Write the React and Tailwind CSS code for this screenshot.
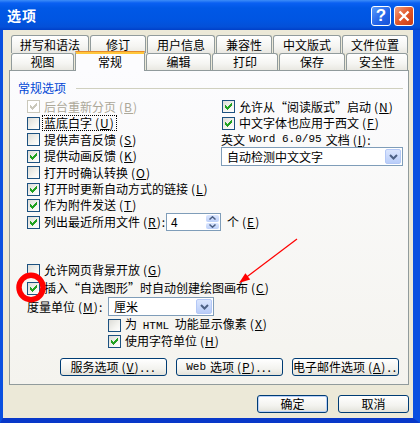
import React from "react";

function Check({ color }) {
  const cols = [[2, 4], [3, 5], [4, 6], [5, 5], [6, 4], [7, 3], [8, 2]];
  return (
    <svg width="11" height="11" viewBox="0 0 11 11" shapeRendering="crispEdges">
      {cols.map(([x, y]) => (
        <rect key={x} x={x} y={y} width="1" height="3" fill={color} />
      ))}
    </svg>
  );
}

function Box({ checked, disabled }) {
  if (disabled)
    return (
      <span className="w-[13px] h-[13px] border border-[#cac8bb] bg-white shrink-0 flex">
        {checked && <Check color="#cac8bb" />}
      </span>
    );
  return (
    <span className="w-[13px] h-[13px] border border-[#1c5180] bg-[linear-gradient(135deg,#dcdcd7,#f4f4f0_60%,#ffffff)] shrink-0 flex">
      {checked && <Check color="#21a121" />}
    </span>
  );
}

function M({ k }) {
  return (
    <span className="ml-[3px] tracking-[1px]">
      (<span className="underline underline-offset-[1px]">{k}</span>)
    </span>
  );
}

function CB({ checked, disabled, children, k, h, focus, extra }) {
  return (
    <div className={`flex items-center ${h}`}>
      <Box checked={checked} disabled={disabled} />
      <span className={disabled ? "ml-[4px] text-[#aca899] whitespace-nowrap" : focus ? "ml-[3px] whitespace-nowrap outline-1 outline-dotted outline-black px-[1px] py-[1px]" : "ml-[4px] whitespace-nowrap"}>
        {children}
        {k && <M k={k} />}
      </span>
      {extra}
    </div>
  );
}

function Chevron() {
  return (
    <svg width="9" height="6" viewBox="0 0 9 6">
      <path d="M1 1 L4.5 4.5 L8 1" stroke="#4d6185" strokeWidth="2" fill="none" />
    </svg>
  );
}

function Select({ w, text }) {
  return (
    <div className={`${w} h-[19px] border border-[#7f9db9] bg-white flex items-center p-[1px]`}>
      <span className="flex-1 pl-[4px] whitespace-nowrap">{text}</span>
      <span className="w-[16px] h-full rounded-[2px] bg-[linear-gradient(to_bottom,#dbe6fe,#b9cdf9)] border border-[#b4c8f6] flex items-center justify-center">
        <Chevron />
      </span>
    </div>
  );
}

function Tab({ label, w, sel }) {
  if (sel)
    return (
      <div className={`${w} h-[20px] mb-[-1px] relative z-10 bg-[#fcfcfe] border-x border-[#919b9c] rounded-t-[3px] flex flex-col`}>
        <div className="h-[1px] bg-[#e68b2c] mx-[-1px] rounded-t-[3px]" />
        <div className="h-[2px] bg-[#ffc73c]" />
        <div className="flex-1 flex items-center justify-center pb-[2px]">{label}</div>
      </div>
    );
  return (
    <div className={`${w} h-full border border-b-0 border-[#919b9c] rounded-t-[3px] bg-[linear-gradient(to_bottom,#ffffff,#f5f5f2_60%,#e9e8e2)] flex items-center justify-center whitespace-nowrap`}>
      {label}
    </div>
  );
}

function Btn({ w, children, def }) {
  return (
    <div
      className={
        def
          ? `${w} h-[18px] border border-[#003c74] rounded-[3px] bg-[linear-gradient(to_bottom,#ffffff,#f3f3ef_60%,#e3e2da)] shadow-[inset_0_0_0_1px_#b8d0f8] flex items-center justify-center whitespace-nowrap`
          : `${w} h-[18px] border border-[#003c74] rounded-[3px] bg-[linear-gradient(to_bottom,#ffffff,#f3f3ef_60%,#e3e2da)] flex items-center justify-center whitespace-nowrap`
      }
    >
      {children}
    </div>
  );
}

const mono = "font-['Liberation_Mono',monospace] text-[11px]";

function TitleBar() {
  return (
    <div className="h-[30px] flex items-center pl-[7px] pr-[6px] bg-[linear-gradient(to_bottom,#3d8df8_0px,#0a60f2_3px,#0058e6_8px,#0055e2_20px,#0450d8_27px,#003fc8_30px)]">
      <span className="text-white font-bold text-[14px] tracking-[1px]">选项</span>
      <div className="ml-auto flex gap-[3px] mt-[1px]">
        <div className="w-[20px] h-[20px] border border-white rounded-[3px] bg-[linear-gradient(135deg,#5a9cfb,#2465ea_55%,#1650d6)] flex items-center justify-center text-white font-bold text-[17px] font-['Liberation_Sans',sans-serif]">
          ?
        </div>
        <div className="w-[20px] h-[20px] border border-white rounded-[3px] bg-[linear-gradient(135deg,#f0a07f,#e2572a_50%,#c93c14)] flex items-center justify-center">
          <svg width="12" height="12" viewBox="0 0 12 12">
            <path d="M1.5 1.5 L10.5 10.5 M10.5 1.5 L1.5 10.5" stroke="white" strokeWidth="2.4" />
          </svg>
        </div>
      </div>
    </div>
  );
}

function Spin() {
  return (
    <div className="w-[55px] h-[18px] border border-[#7f9db9] bg-white flex items-center">
      <span className="pl-[4px] flex-1">4</span>
      <div className="w-[15px] h-full p-[1px] flex flex-col gap-[1px]">
        <div className="flex-1 rounded-[2px] bg-[linear-gradient(to_bottom,#dbe6fe,#bdd0f9)] flex items-center justify-center">
          <svg width="7" height="4" viewBox="0 0 7 4">
            <path d="M0.5 3.5 L3.5 0.8 L6.5 3.5" stroke="#4d6185" strokeWidth="1.5" fill="none" />
          </svg>
        </div>
        <div className="flex-1 rounded-[2px] bg-[linear-gradient(to_bottom,#dbe6fe,#bdd0f9)] flex items-center justify-center">
          <svg width="7" height="4" viewBox="0 0 7 4">
            <path d="M0.5 0.5 L3.5 3.2 L6.5 0.5" stroke="#4d6185" strokeWidth="1.5" fill="none" />
          </svg>
        </div>
      </div>
    </div>
  );
}

function Panel() {
  return (
    <div className="h-[315px] border border-[#919b9c] bg-[linear-gradient(to_bottom,#fcfcfe,#f4f3ee)] flex flex-col">
      <div className="mt-[8px] h-[18px] flex items-center pl-[8px] pr-[5px]">
        <span className="text-[#0046d5]">常规选项</span>
        <div className="flex-1 h-px bg-[#d0d0bf] ml-[10px]" />
      </div>
      <div className="flex pl-[17px] mt-[1px]">
        <div className="w-[194px] flex flex-col">
          <CB h="h-[17px]" checked disabled k="B">后台重新分页</CB>
          <CB h="h-[16px]" focus k="U">蓝底白字</CB>
          <CB h="h-[17px]" k="S">提供声音反馈</CB>
          <CB h="h-[16px]" checked k="K">提供动画反馈</CB>
          <CB h="h-[17px]" k="O">打开时确认转换</CB>
          <CB h="h-[16px]" checked k="L">打开时更新自动方式的链接</CB>
          <CB h="h-[16px]" checked k="T">作为附件发送</CB>
        </div>
        <div className="w-[182px] flex flex-col">
          <div className="pl-[1px]">
            <CB h="h-[17px]" checked k="N">允许从“阅读版式”启动</CB>
            <CB h="h-[16px]" checked k="F">中文字体也应用于西文</CB>
          </div>
          <div className="h-[17px] flex items-center whitespace-nowrap">
            英文 <span className={`${mono} mx-[4px]`}>Word 6.0/95</span> 文档<M k="I" />:
          </div>
          <div className="mt-[-1px]">
            <Select w="w-[182px]" text="自动检测中文文字" />
          </div>
        </div>
      </div>
      <div className="pl-[17px]">
        <div className="flex items-center h-[18px]">
          <Box checked />
          <span className="ml-[4px] w-[122px] whitespace-nowrap">
            列出最近所用文件<M k="R" />:
          </span>
          <Spin />
          <span className="ml-[6px]">
            个<M k="E" />
          </span>
        </div>
        <div className="mt-[30px]">
          <CB h="h-[18px]" k="G">允许网页背景开放</CB>
          <CB h="h-[18px]" checked k="C">插入“自选图形”时自动创建绘图画布</CB>
          <div className="h-[19px] flex items-center">
            <span className="w-[81px] whitespace-nowrap">
              度量单位<M k="M" />:
            </span>
            <Select w="w-[106px]" text="厘米" />
          </div>
          <div className="pl-[81px] mt-[1px]">
            <CB h="h-[16px]" k="X">
              为 <span className={`${mono} mx-[3px]`}>HTML</span> 功能显示像素
            </CB>
            <CB h="h-[16px]" checked k="H">使用字符单位</CB>
          </div>
        </div>
      </div>
      <div className="flex ml-[50px] gap-[9px] mt-[9px]">
        <Btn w="w-[107px]">
          服务选项<M k="V" />
          <span className="tracking-[2px] ml-[1px]">...</span>
        </Btn>
        <Btn w="w-[107px]">
          <span className={`${mono} mr-[4px]`}>Web</span>选项<M k="P" />
          <span className="tracking-[2px] ml-[1px]">...</span>
        </Btn>
        <Btn w="w-[107px]">
          电子邮件选项<M k="A" />
          <span className="tracking-[2px] ml-[1px]">..</span>
        </Btn>
      </div>
    </div>
  );
}

export default function App() {
  const row1 = [
    ["拼写和语法", "w-[78px]"],
    ["修订", "w-[56px]"],
    ["用户信息", "w-[68px]"],
    ["兼容性", "w-[56px]"],
    ["中文版式", "w-[68px]"],
    ["文件位置", "w-[66px]"],
  ];
  const row2 = [
    ["视图", "w-[63px]", false],
    ["常规", "w-[70px]", true],
    ["编辑", "w-[65px]", false],
    ["打印", "w-[66px]", false],
    ["保存", "w-[66px]", false],
    ["安全性", "w-[62px]", false],
  ];
  return (
    <div className="relative w-[420px] h-[423px] overflow-hidden bg-[#ece9d8] text-[12px] leading-none text-black font-['Noto_Sans_CJK_SC','Noto_Sans',sans-serif]">
      <TitleBar />
      <div className="h-[393px] border-l-[3px] border-r-[7px] border-b-[5px] border-l-[#0a50e0] border-r-[#0a50e0] border-b-[#0838c9] pl-[6px] pr-[4px] pt-[5px]">
        <div className="flex gap-[1px] ml-[2px] h-[18px]">
          {row1.map(([l, w]) => (
            <Tab key={l} label={l} w={w} />
          ))}
        </div>
        <div className="flex gap-[1px] ml-[2px] h-[17px] items-end relative z-10">
          {row2.map(([l, w, s]) => (
            <Tab key={l} label={l} w={w} sel={s} />
          ))}
        </div>
        <Panel />
        <div className="flex justify-end gap-[10px] mt-[10px]">
          <Btn w="w-[71px]" def>
            确定
          </Btn>
          <Btn w="w-[71px]">取消</Btn>
        </div>
      </div>
      <svg className="absolute inset-0 pointer-events-none" width="420" height="423" viewBox="0 0 420 423">
        <ellipse cx="31" cy="287.5" rx="12" ry="12.2" stroke="#ff0000" strokeWidth="5.5" fill="none" />
        <line x1="297" y1="239" x2="246" y2="277.5" stroke="#ff0000" strokeWidth="1.2" />
        <polygon points="239,283 245.4,273.2 250.2,279.6" fill="#ff0000" />
      </svg>
    </div>
  );
}
